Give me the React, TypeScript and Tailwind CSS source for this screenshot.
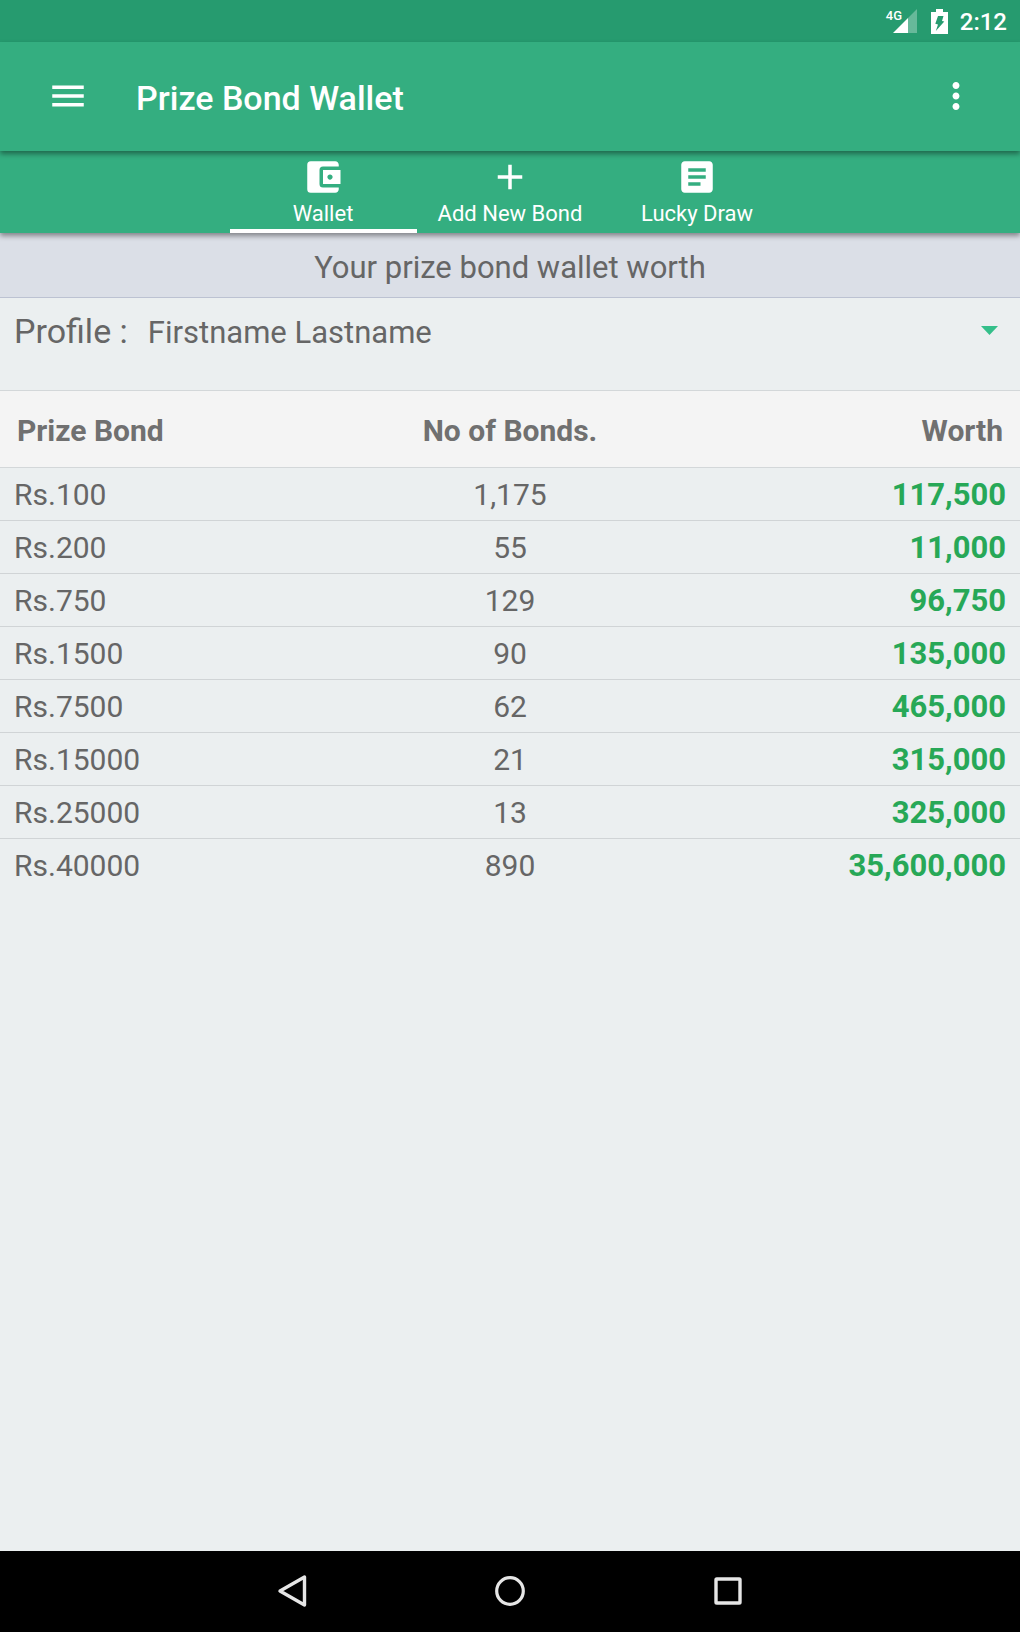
import { useState } from "react";
import {
  MdAccountBalanceWallet,
  MdAdd,
  MdArticle,
  MdMenu,
  MdMoreVert,
} from "react-icons/md";

interface BondRow {
  value: number;
  count: number;
}

const bonds: BondRow[] = [
  { value: 100, count: 1175 },
  { value: 200, count: 55 },
  { value: 750, count: 129 },
  { value: 1500, count: 90 },
  { value: 7500, count: 62 },
  { value: 15000, count: 21 },
  { value: 25000, count: 13 },
  { value: 40000, count: 890 },
];

const tabs = [
  { id: "wallet", label: "Wallet", icon: MdAccountBalanceWallet },
  { id: "add", label: "Add New Bond", icon: MdAdd },
  { id: "draw", label: "Lucky Draw", icon: MdArticle },
];

const profiles = ["Firstname Lastname"];

const formatNumber = (n: number) => n.toLocaleString("en-US");

function StatusBar() {
  return (
    <div className="flex h-[42px] items-center justify-end bg-[#269b6f] pr-[13px] text-white">
      <div className="relative mr-[13px]">
        <svg width="32" height="26" viewBox="0 0 32 26" aria-hidden="true">
          <path d="M31 1v24H22V10z" fill="#fff" fillOpacity="0.3" />
          <path d="M22 10v15H7z" fill="#fff" />
        </svg>
        <span className="absolute top-0 left-0 text-[13px] leading-4 font-medium">
          4G
        </span>
      </div>
      <svg
        className="mr-3"
        width="17"
        height="25"
        viewBox="0 0 17 25"
        aria-hidden="true"
      >
        <path
          fill="#fff"
          fillRule="evenodd"
          d="M5 0h7v3h5v22H0V3h5zM7 7l-2.7 7.8 2.700.7L4.800 22l8.500-9.500-2.300-.5 1.500-5z"
        />
      </svg>
      <span className="pt-0.5 text-2xl font-medium">2:12</span>
    </div>
  );
}

function NavigationBar() {
  return (
    <footer className="flex h-[81px] items-center justify-center gap-[178px] bg-black pb-0.5">
      <button type="button" aria-label="Back">
        <svg width="40" height="40" viewBox="0 0 40 40" fill="none">
          <path
            d="M32.5 6v28L8 20z"
            stroke="#e6e6e6"
            strokeWidth="3.4"
            strokeLinejoin="round"
          />
        </svg>
      </button>
      <button type="button" aria-label="Home">
        <svg width="40" height="40" viewBox="0 0 40 40" fill="none">
          <circle cx="20" cy="20" r="13.3" stroke="#e6e6e6" strokeWidth="3.2" />
        </svg>
      </button>
      <button type="button" aria-label="Recent apps">
        <svg width="40" height="40" viewBox="0 0 40 40" fill="none">
          <rect
            x="8"
            y="8"
            width="24"
            height="24"
            rx="0.8"
            stroke="#e6e6e6"
            strokeWidth="3.4"
          />
        </svg>
      </button>
    </footer>
  );
}

export default function App() {
  const [activeTab, setActiveTab] = useState("wallet");
  const [profile, setProfile] = useState(profiles[0]);

  return (
    <div className="flex min-h-screen flex-col bg-[#ebeff0] font-[Roboto,sans-serif] text-[#666666]">
      <StatusBar />

      <header className="relative z-20 flex h-[109px] items-center bg-[#34ae80] px-[47px] pb-0.5 text-white shadow-[0_3px_5px_rgba(0,0,0,0.4)]">
        <button type="button" aria-label="Open menu">
          <MdMenu size={42} />
        </button>
        <h1 className="ml-[47px] flex-1 pt-1 text-[34px] leading-10 font-medium">
          Prize Bond Wallet
        </h1>
        <button type="button" aria-label="More options" className="-mr-1">
          <MdMoreVert size={42} />
        </button>
      </header>

      <nav className="relative z-10 flex justify-center bg-[#34ae80] text-white shadow-[0_3px_5px_rgba(0,0,0,0.4)]">
        {tabs.map((tab) => (
          <button
            key={tab.id}
            type="button"
            onClick={() => setActiveTab(tab.id)}
            className={`flex h-[82px] w-[187px] flex-col items-center border-b-4 pt-[5px] ${
              activeTab === tab.id ? "border-white" : "border-transparent"
            }`}
          >
            <tab.icon size={42} />
            <span className="mt-[3px] text-[22px] leading-[26px]">
              {tab.label}
            </span>
          </button>
        ))}
      </nav>

      <main className="flex-1">
        <h2 className="border-b border-[#bcc2d2] bg-[#dbdfe7] pt-[17px] pb-[11px] text-center text-[31px] leading-9">
          Your prize bond wallet worth
        </h2>

        <div className="flex h-[92px] items-baseline pt-[13px] pr-5 pl-3.5">
          <label htmlFor="profile" className="text-[34px] leading-10">
            Profile :
          </label>
          <div className="relative ml-5 flex-1">
            <select
              id="profile"
              value={profile}
              onChange={(e) => setProfile(e.target.value)}
              className="w-full appearance-none bg-transparent text-[31px] leading-10"
            >
              {profiles.map((name) => (
                <option key={name}>{name}</option>
              ))}
            </select>
            <svg
              className="pointer-events-none absolute top-[13px] right-0.5"
              width="17"
              height="9"
              viewBox="0 0 17 9"
              aria-hidden="true"
            >
              <path d="M0 0h17L8.5 9z" fill="#34bf8a" />
            </svg>
          </div>
        </div>

        <table className="w-full table-fixed text-[30px] leading-9">
          <thead>
            <tr className="h-[77px] border-y border-[#d3d7d9] bg-[#f4f4f4] text-[#707070]">
              <th className="pt-1 pl-[17px] text-left font-bold">Prize Bond</th>
              <th className="pt-1 text-center font-bold">No of Bonds.</th>
              <th className="pt-1 pr-[17px] text-right font-bold">Worth</th>
            </tr>
          </thead>
          <tbody>
            {bonds.map((bond) => (
              <tr
                key={bond.value}
                className="h-[53px] border-b border-[#d0d4d6] last:border-b-0"
              >
                <td className="pt-0.5 pl-3.5">Rs.{bond.value}</td>
                <td className="pt-0.5 text-center">
                  {formatNumber(bond.count)}
                </td>
                <td className="pt-0.5 pr-3.5 text-right text-[31px] font-bold text-[#27a857]">
                  {formatNumber(bond.value * bond.count)}
                </td>
              </tr>
            ))}
          </tbody>
        </table>
      </main>

      <NavigationBar />
    </div>
  );
}
